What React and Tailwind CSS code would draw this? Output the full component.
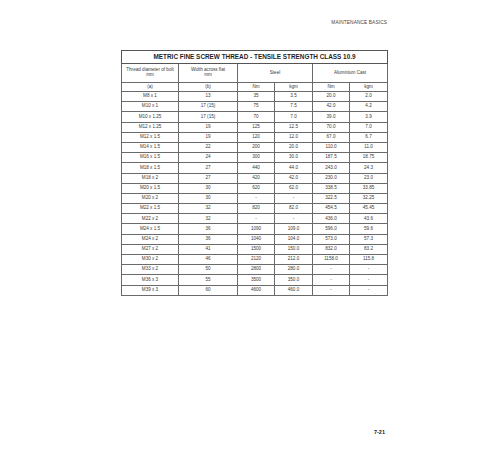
import React from 'react';

const rows = [
  ['M8 x 1', '13', '35', '3.5', '20.0', '2.0'],
  ['M10 x 1', '17 (15)', '75', '7.5', '42.0', '4.2'],
  ['M10 x 1.25', '17 (15)', '70', '7.0', '39.0', '3.9'],
  ['M12 x 1.25', '19', '125', '12.5', '70.0', '7.0'],
  ['M12 x 1.5', '19', '120', '12.0', '67.0', '6.7'],
  ['M14 x 1.5', '22', '200', '20.0', '110.0', '11.0'],
  ['M16 x 1.5', '24', '300', '30.0', '187.5', '18.75'],
  ['M18 x 1.5', '27', '440', '44.0', '243.0', '24.3'],
  ['M18 x 2', '27', '420', '42.0', '230.0', '23.0'],
  ['M20 x 1.5', '30', '620', '62.0', '338.5', '33.85'],
  ['M20 x 2', '30', '-', '-', '322.5', '32.25'],
  ['M22 x 1.5', '32', '820', '82.0', '454.5', '45.45'],
  ['M22 x 2', '32', '-', '-', '436.0', '43.6'],
  ['M24 x 1.5', '36', '1090', '109.0', '596.0', '59.6'],
  ['M24 x 2', '36', '1040', '104.0', '573.0', '57.3'],
  ['M27 x 2', '41', '1500', '150.0', '832.0', '83.2'],
  ['M30 x 2', '46', '2120', '212.0', '1158.0', '115.8'],
  ['M33 x 2', '50', '2800', '280.0', '-', '-'],
  ['M36 x 3', '55', '3500', '350.0', '-', '-'],
  ['M39 x 3', '60', '4600', '460.0', '-', '-'],
];

const cell = 'border border-[#6a6a6a] p-0 text-center align-middle leading-none';

export default function App() {
  return (
    <div className="w-[500px] h-[450px] bg-white flex flex-col pl-[121px] pr-[113px] font-['Liberation_Sans',Arial,sans-serif] text-[#3a3a3a]">
      <div className="pt-[21px] h-[50px] text-right text-[4.8px] leading-none tracking-[0.1px] text-[#444]">
        MAINTENANCE BASICS
      </div>

      <table className="border-collapse table-fixed w-[266px]">
        <colgroup>
          <col className="w-[57px]" />
          <col className="w-[59px]" />
          <col className="w-[37px]" />
          <col className="w-[38px]" />
          <col className="w-[37px]" />
          <col className="w-[38px]" />
        </colgroup>
        <tbody>
          <tr className="h-[13px]">
            <td colSpan={6} className={`${cell} text-[6.4px] font-bold text-[#1f1f1f] border-[#555]`}>
              METRIC FINE SCREW THREAD - TENSILE STRENGTH CLASS 10.9
            </td>
          </tr>
          <tr className="h-[19px] text-[4.6px]">
            <td className={`${cell} leading-[1.3]`}>Thread diameter of bolt<br />mm</td>
            <td className={`${cell} leading-[1.3]`}>Width across flat<br />mm</td>
            <td colSpan={2} className={cell}>Steel</td>
            <td colSpan={2} className={cell}>Aluminium Cast</td>
          </tr>
          <tr className="h-[9px] text-[4.6px]">
            <td className={cell}>(a)</td>
            <td className={cell}>(b)</td>
            <td className={cell}>Nm</td>
            <td className={cell}>kgm</td>
            <td className={cell}>Nm</td>
            <td className={cell}>kgm</td>
          </tr>
          {rows.map((r) => (
            <tr key={r[0]} className="h-[10.2px] text-[4.6px]">
              {r.map((v, i) => (
                <td key={i} className={cell}>{v}</td>
              ))}
            </tr>
          ))}
        </tbody>
      </table>

      <div className="flex-1" />
      <div className="pb-[15px] pr-[2px] text-right text-[5.5px] font-bold leading-none text-[#222]">
        7-21
      </div>
    </div>
  );
}
